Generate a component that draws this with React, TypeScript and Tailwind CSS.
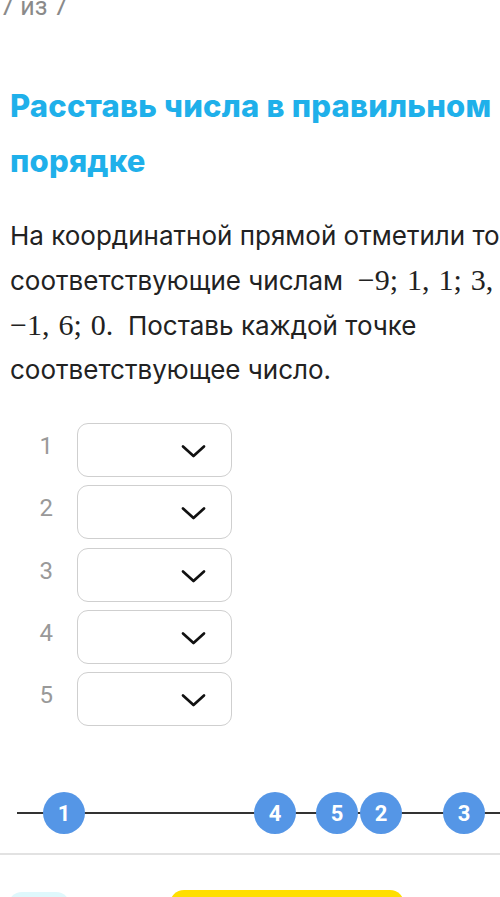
import React from "react";

const M = ({ children }: { children: React.ReactNode }) => (
  <span className="text-[30px]" style={{ fontFamily: '"Liberation Serif", "DejaVu Serif", serif' }}>
    {children}
  </span>
);

const S = () => <span className="inline-block w-[9px]" />;

const Chevron = () => (
  <svg width="25" height="15" viewBox="0 0 25 15" fill="none">
    <path d="M2 2.5 L12.5 12 L23 2.5" stroke="#111" strokeWidth="2.7" strokeLinecap="round" strokeLinejoin="round" />
  </svg>
);

const points = [
  { n: 1, x: 64 },
  { n: 4, x: 275 },
  { n: 5, x: 337 },
  { n: 2, x: 381 },
  { n: 3, x: 464 },
];

export default function App() {
  return (
    <div className="w-[500px] h-[897px] overflow-hidden bg-white relative" style={{ fontFamily: 'Inter, "Noto Sans", sans-serif' }}>
      <div className="w-[680px]">
        <div className="h-[17px] overflow-hidden flex items-end">
          <div className="text-[25px] leading-[26px] text-[#8a8a8a] -mb-[3px]" style={{ fontFamily: 'Roboto, sans-serif' }}>
            7 из 7
          </div>
        </div>

        <h1 className="mt-[61px] pl-[10px] text-[31px] leading-[55px] font-extrabold text-[#1fb0ea] w-[560px] tracking-[0.2px]">
          Расставь числа в правильном порядке
        </h1>

        <p className="mt-[26px] pl-[10px] text-[26px] leading-[44px] text-[#222] w-[660px] whitespace-nowrap">
          На координатной прямой отметили точки,
          <br />
          соответствующие числам&nbsp;&nbsp;<M>−9;<S />1,<S />1;<S />3,<S />5;</M>
          <br />
          <M>−1,<S />6;<S />0.</M>&nbsp;&nbsp;Поставь каждой точке
          <br />
          соответствующее число.
        </p>

        <div className="mt-[31px] flex flex-col gap-[8.3px]">
          {[1, 2, 3, 4, 5].map((n) => (
            <div key={n} className="flex items-center">
              <div
                className="w-[53px] text-right text-[24px] text-[#999] -mt-[8px]"
                style={{ fontFamily: 'Roboto, sans-serif' }}
              >
                {n}
              </div>
              <div className="ml-[24px] w-[155px] h-[54px] rounded-[11px] border-[1.5px] border-[#cfcfcf] flex items-center justify-end pr-[25px] pt-[3px]">
                <Chevron />
              </div>
            </div>
          ))}
        </div>

        <div className="mt-[66px] relative h-[42px]">
          <div className="absolute left-[17px] right-0 top-[20px] h-[2px] bg-[#333]" />
          {points.map((p) => (
            <div
              key={p.n}
              className="absolute top-0 w-[42px] h-[42px] rounded-full bg-[#5596e6] flex items-center justify-center text-white text-[22px] font-bold"
              style={{ left: p.x - 21, fontFamily: 'Roboto, sans-serif' }}
            >
              {p.n}
            </div>
          ))}
        </div>

        <div className="mt-[19px] h-[1.5px] bg-[#e2e2e2] w-[500px]" />

        <div className="mt-[35px] flex items-start">
          <div className="ml-[8px] mt-[2px] w-[62px] h-[60px] rounded-[14px] bg-[#dff8fc]" />
          <div className="ml-[100px] w-[234px] h-[60px] rounded-[14px] bg-[#ffdf00]" />
        </div>
      </div>
    </div>
  );
}
